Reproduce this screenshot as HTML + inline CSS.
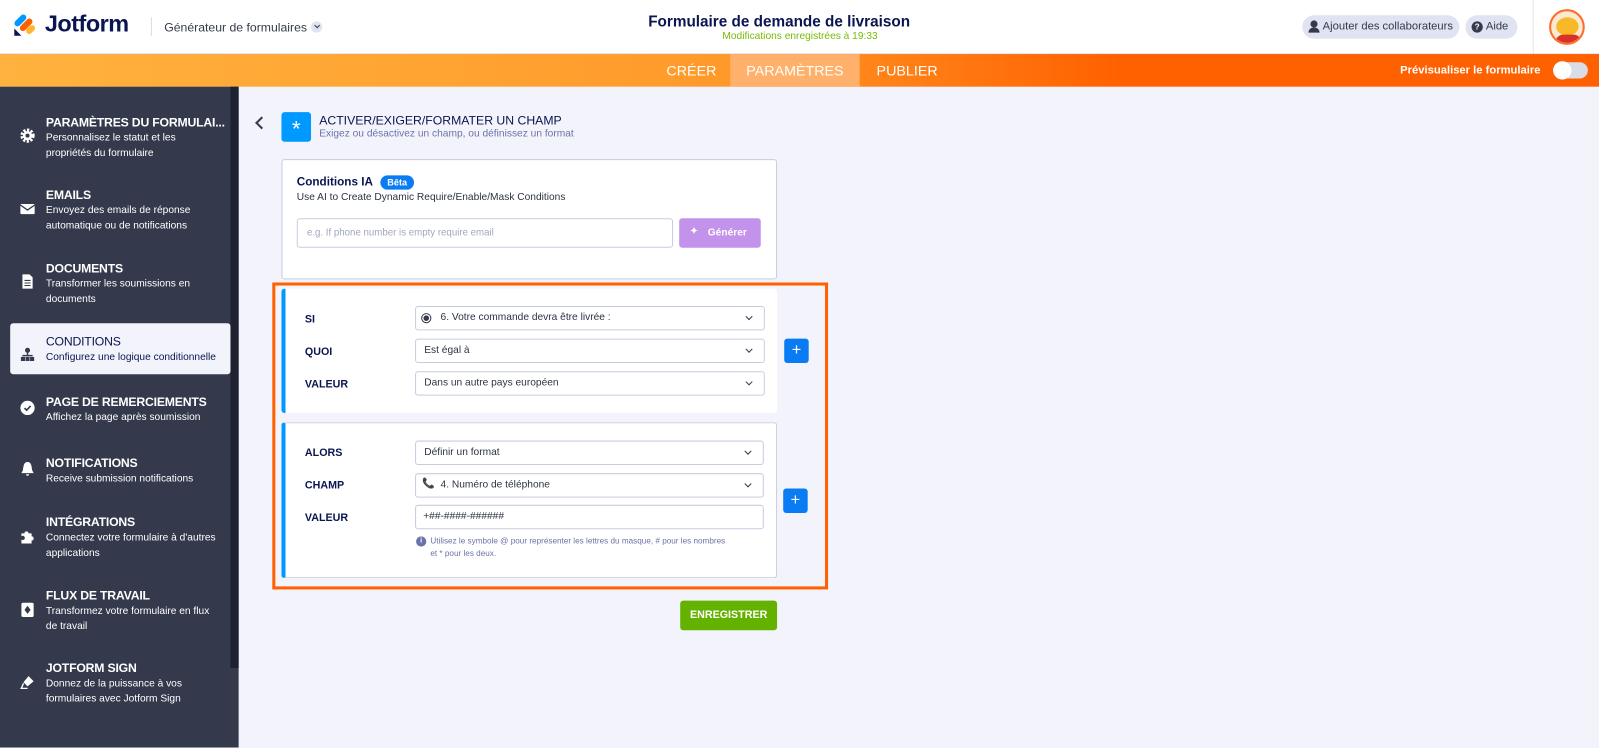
<!DOCTYPE html>
<html><head><meta charset="utf-8"><style>
*{box-sizing:border-box;margin:0;padding:0}
html,body{width:1599px;height:733px;overflow:hidden;background:#f3f3fb}
#w{position:absolute;left:0;top:0;width:1568px;height:719px;transform:scale(1.0198);transform-origin:0 0;font-family:"Liberation Sans",sans-serif;color:#0a1551}
.a{position:absolute}
.top{left:0;top:0;width:1568px;height:53px;background:#fff;border-bottom:1px solid #e3e3ea}
.bar{left:0;top:53px;width:1568px;height:32px;background:linear-gradient(90deg,#ffb23f 0%,#ff9a2a 45%,#ff6100 70%,#ff6100 100%)}
.tab{top:53px;height:32px;line-height:32px;color:#fff;font-size:14px;text-align:center}
.side{left:0;top:85px;width:234px;height:648px;background:#343a4c}
.sb{left:226px;top:85px;width:8px;height:570px;background:#1e2230}
.it{left:45px;color:#fff}
.it b{display:block;font-size:12px;font-weight:bold;letter-spacing:-.2px}
.it span{display:block;font-size:10px;line-height:15px;margin-top:1px}
.ic{left:19px;width:16px;height:16px}
.lbl{font-size:10.5px;font-weight:bold;color:#0a1551}
.sel{height:24px;background:#fff;border:1px solid #c8ccdf;border-radius:3px;font-size:10px;line-height:22px;padding-left:8px;color:#2c3345}
.sel:after{content:"";position:absolute;right:12px;top:7px;width:4px;height:4px;border-right:1.3px solid #343a4c;border-bottom:1.3px solid #343a4c;transform:rotate(45deg)}
.plus{width:24px;height:24px;background:#0a7cf3;border-radius:3px;color:#fff;font-size:16px;line-height:23px;text-align:center}
</style></head><body><div id="w">
<div class="a top"></div>
<svg class="a" style="left:13px;top:13px" width="24" height="24" viewBox="0 0 24 24"><rect x="4" y="0" width="6" height="14" rx="3" transform="rotate(45 7 7)" fill="#0099ff"/><rect x="10" y="4" width="6" height="15" rx="3" transform="rotate(45 13 11)" fill="#ff6100"/><rect x="14" y="11" width="6" height="10" rx="3" transform="rotate(45 17 16)" fill="#ffb629"/><path d="M1 15 L1 22 L8 22Z" fill="#0a1551"/></svg>
<div class="a" style="left:44px;top:10px;font-size:23px;font-weight:bold;color:#0a1551;letter-spacing:-.5px">Jotform</div>
<div class="a" style="left:148px;top:17px;width:1px;height:18px;background:#dadde8"></div>
<div class="a" style="left:161px;top:20px;font-size:12px;color:#343a4c">Générateur de formulaires</div>
<div class="a" style="left:305px;top:21px;width:11px;height:11px;border-radius:50%;background:#e0e3f0"></div>
<div class="a" style="left:308.5px;top:23px;width:4px;height:4px;border-right:1px solid #343a4c;border-bottom:1px solid #343a4c;transform:rotate(45deg)"></div>
<div class="a" style="left:0;top:13px;width:1528px;text-align:center;font-size:15px;font-weight:bold;color:#0a1551">Formulaire de demande de livraison</div>
<div class="a" style="left:0;top:30px;width:1569px;text-align:center;font-size:10px;color:#78bb07">Modifications enregistrées à 19:33</div>
<div class="a" style="left:1277px;top:15px;width:154px;height:23px;border-radius:12px;background:#dfe3f2;font-size:11px;line-height:23px;padding-left:20px;color:#343a4c">Ajouter des collaborateurs</div>
<div class="a" style="left:1285px;top:20px;width:7px;height:7px;border-radius:50%;background:#343a4c"></div>
<div class="a" style="left:1283px;top:27px;width:11px;height:5px;border-radius:5px 5px 0 0;background:#343a4c"></div>
<div class="a" style="left:1437px;top:15px;width:51px;height:23px;border-radius:12px;background:#dfe3f2;font-size:11px;line-height:23px;padding-left:20px;color:#343a4c">Aide</div>
<div class="a" style="left:1443px;top:21px;width:11px;height:11px;border-radius:50%;background:#343a4c;color:#fff;font-size:8px;line-height:11px;text-align:center;font-weight:bold">?</div>
<div class="a" style="left:1503px;top:0;width:1px;height:53px;background:#e3e3ea"></div>
<div class="a" style="left:1519px;top:9px;width:35px;height:35px;border-radius:50%;background:#fbe9d0;border:2px solid #ff6b2c;overflow:hidden"><div class="a" style="left:5px;top:6px;width:22px;height:18px;border-radius:50%;background:#f7b928"></div><div class="a" style="left:4px;top:23px;width:26px;height:12px;background:#d8312a;border-radius:8px 8px 0 0"></div></div>
<div class="a bar"></div>
<div class="a tab" style="left:640px;width:76px">CRÉER</div>
<div class="a tab" style="left:716px;width:127px;background:#ffb06a">PARAMÈTRES</div>
<div class="a tab" style="left:843px;width:93px">PUBLIER</div>
<div class="a" style="left:1373px;top:63px;font-size:11px;font-weight:bold;color:#fff">Prévisualiser le formulaire</div>
<div class="a" style="left:1523px;top:61px;width:34px;height:16px;border-radius:8px;background:#dadde8"></div>
<div class="a" style="left:1523px;top:60px;width:18px;height:18px;border-radius:50%;background:#fff"></div>
<div class="a side"></div><div class="a sb"></div>
<div class="a" style="left:10px;top:317px;width:216px;height:50px;background:#f3f3fb;border-radius:3px"></div>
<div class="a it" style="top:113px"><b>PARAMÈTRES DU FORMULAI...</b><span>Personnalisez le statut et les<br>propriétés du formulaire</span></div>
<div class="a it" style="top:184px"><b>EMAILS</b><span>Envoyez des emails de réponse<br>automatique ou de notifications</span></div>
<div class="a it" style="top:256px"><b>DOCUMENTS</b><span>Transformer les soumissions en<br>documents</span></div>
<div class="a it" style="top:328px;color:#0a1551"><b style="font-weight:normal">CONDITIONS</b><span>Configurez une logique conditionnelle</span></div>
<div class="a it" style="top:387px"><b>PAGE DE REMERCIEMENTS</b><span>Affichez la page après soumission</span></div>
<div class="a it" style="top:447px"><b>NOTIFICATIONS</b><span>Receive submission notifications</span></div>
<div class="a it" style="top:505px"><b>INTÉGRATIONS</b><span>Connectez votre formulaire à d'autres<br>applications</span></div>
<div class="a it" style="top:577px"><b>FLUX DE TRAVAIL</b><span>Transformez votre formulaire en flux<br>de travail</span></div>
<div class="a it" style="top:648px"><b>JOTFORM SIGN</b><span>Donnez de la puissance à vos<br>formulaires avec Jotform Sign</span></div>
<svg class="a ic" style="top:125px" viewBox="0 0 16 16"><circle cx="8" cy="8" r="5.5" fill="none" stroke="#fff" stroke-width="3" stroke-dasharray="2.2 1.4"/><circle cx="8" cy="8" r="4.5" fill="#fff"/><circle cx="8" cy="8" r="2" fill="#343a4c"/></svg>
<svg class="a ic" style="top:197px" viewBox="0 0 16 16"><rect x="1" y="3" width="14" height="10" rx="1" fill="#fff"/><path d="M1 4 L8 9 L15 4" stroke="#343a4c" stroke-width="1.3" fill="none"/></svg>
<svg class="a ic" style="top:268px" viewBox="0 0 16 16"><path d="M3 1 H10 L13 4 V15 H3Z" fill="#fff"/><path d="M5 7H11M5 9.5H11M5 12H11" stroke="#343a4c"/></svg>
<svg class="a ic" style="top:340px" viewBox="0 0 16 16"><g fill="#343a4c"><circle cx="8" cy="3.5" r="2.5"/><rect x="7.3" y="5" width="1.4" height="4"/><rect x="3" y="8" width="10" height="1.4"/><rect x="1.5" y="10" width="4" height="4"/><rect x="6" y="10" width="4" height="4"/><rect x="10.5" y="10" width="4" height="4"/></g></svg>
<svg class="a ic" style="top:392px" viewBox="0 0 16 16"><circle cx="8" cy="8" r="7" fill="#fff"/><path d="M5 8.2 L7.2 10.2 L11 6" stroke="#343a4c" stroke-width="1.6" fill="none"/></svg>
<svg class="a ic" style="top:452px" viewBox="0 0 16 16"><path d="M8 1 C4 1 4 6 3.5 9 L2 12 H14 L12.5 9 C12 6 12 1 8 1Z M6.5 13 A1.5 1.5 0 0 0 9.5 13Z" fill="#fff"/></svg>
<svg class="a ic" style="top:518px" viewBox="0 0 16 16"><path d="M2 5 H5 A2 2 0 1 1 9 5 H12 V8 A2 2 0 1 1 12 12 V15 H2 V11 A2 2 0 1 0 2 8Z" fill="#fff"/></svg>
<svg class="a ic" style="top:590px" viewBox="0 0 16 16"><rect x="2" y="1" width="12" height="14" rx="1.5" fill="#fff"/><path d="M8 4 L11 8 L8 12 L5 8Z" fill="#343a4c"/></svg>
<svg class="a ic" style="top:661px" viewBox="0 0 16 16"><path d="M9 2 L14 7 L8 12 L4 8Z" fill="#fff"/><path d="M4 9 L2 14 M1 14 H8" stroke="#fff" stroke-width="1.3"/></svg>
<div class="a" style="left:252px;top:116px;width:9px;height:9px;border-left:2px solid #343a4c;border-bottom:2px solid #343a4c;transform:rotate(45deg)"></div>
<div class="a" style="left:276px;top:110px;width:29px;height:29px;background:#0099ff;border-radius:3px;color:#fff;font-size:22px;line-height:33px;text-align:center">*</div>
<div class="a" style="left:313px;top:111px;font-size:12px;color:#0a1551">ACTIVER/EXIGER/FORMATER UN CHAMP</div>
<div class="a" style="left:313px;top:126px;font-size:10px;color:#6c73a8">Exigez ou désactivez un champ, ou définissez un format</div>
<div class="a" style="left:276px;top:156px;width:486px;height:118px;background:#fff;border:1px solid #c8ccdf;border-radius:3px"></div>
<div class="a" style="left:291px;top:173px;font-size:11.5px;font-weight:bold;color:#0a1551">Conditions IA</div>
<div class="a" style="left:373px;top:172px;width:33px;height:14px;border-radius:7px;background:#0a7cf3;color:#fff;font-size:9px;font-weight:bold;line-height:14px;text-align:center">Bêta</div>
<div class="a" style="left:291px;top:188px;font-size:10px;color:#2c3345">Use AI to Create Dynamic Require/Enable/Mask Conditions</div>
<div class="a" style="left:291px;top:214px;width:369px;height:29px;border:1px solid #c8ccdf;border-radius:3px;font-size:9.5px;color:#a0a6c0;line-height:27px;padding-left:9px">e.g. If phone number is empty require email</div>
<div class="a" style="left:666px;top:214px;width:80px;height:29px;border-radius:3px;background:#c393ec;color:#fff;font-size:10px;font-weight:bold;line-height:29px;padding-left:28px">Générer</div>
<div class="a" style="left:676px;top:220px;color:#fff;font-size:11px">✦</div>
<div class="a" style="left:267px;top:277px;width:545px;height:301px;border:3px solid #ff6100"></div>
<div class="a" style="left:276px;top:283px;width:486px;height:122px;background:#fff;border-left:4px solid #0099ff;border-radius:3px"></div>
<div class="a" style="left:276px;top:414px;width:486px;height:153px;background:#fff;border:1px solid #c8ccdf;border-left:4px solid #0099ff;border-radius:3px"></div>
<div class="a lbl" style="left:299px;top:307px">SI</div>
<div class="a lbl" style="left:299px;top:339px">QUOI</div>
<div class="a lbl" style="left:299px;top:371px">VALEUR</div>
<div class="a lbl" style="left:299px;top:438px">ALORS</div>
<div class="a lbl" style="left:299px;top:470px">CHAMP</div>
<div class="a lbl" style="left:299px;top:502px">VALEUR</div>
<div class="a sel" style="left:407px;top:300px;width:343px;padding-left:24px">6. Votre commande devra être livrée :</div>
<div class="a" style="left:413px;top:307px;width:10px;height:10px;border-radius:50%;border:1.5px solid #343a4c;background:radial-gradient(#343a4c 45%,#fff 50%)"></div>
<div class="a sel" style="left:407px;top:332px;width:343px">Est égal à</div>
<div class="a sel" style="left:407px;top:364px;width:343px">Dans un autre pays européen</div>
<div class="a sel" style="left:407px;top:432px;width:342px">Définir un format</div>
<div class="a sel" style="left:407px;top:464px;width:342px;padding-left:24px">4. Numéro de téléphone</div>
<div class="a" style="left:414px;top:469px;font-size:10px;color:#343a4c">📞</div>
<div class="a" style="left:407px;top:495px;width:342px;height:24px;background:#fff;border:1px solid #c8ccdf;border-radius:3px;font-size:10px;line-height:22px;padding-left:7px;color:#2c3345">+##-####-######</div>
<div class="a" style="left:408px;top:526px;width:10px;height:10px;border-radius:50%;background:#6c73a8;color:#fff;font-size:7px;text-align:center;line-height:10px;font-weight:bold">i</div>
<div class="a" style="left:422px;top:525px;font-size:8px;line-height:12px;color:#6c73a8;width:340px">Utilisez le symbole @ pour représenter les lettres du masque, # pour les nombres<br>et * pour les deux.</div>
<div class="a plus" style="left:769px;top:332px">+</div>
<div class="a plus" style="left:768px;top:479px">+</div>
<div class="a" style="left:667px;top:589px;width:95px;height:29px;background:#64b200;border-radius:3px;color:#fff;font-size:10.5px;font-weight:bold;line-height:29px;text-align:center">ENREGISTRER</div>
</div></body></html>
